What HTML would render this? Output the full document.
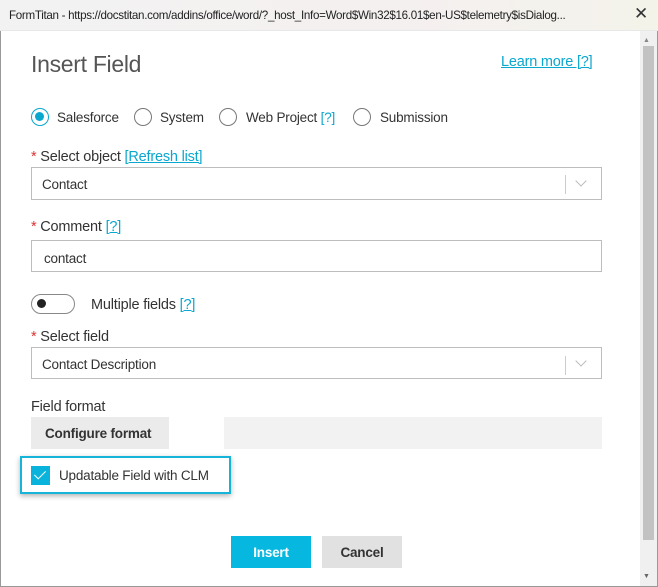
<!DOCTYPE html>
<html><head><style>
*{margin:0;padding:0;box-sizing:border-box}
body{width:658px;height:587px;background:#fff;font-family:"Segoe UI","Liberation Sans",sans-serif;color:#333;position:relative;overflow:hidden;font-size:13.5px;letter-spacing:-0.2px}
.a{position:absolute;white-space:nowrap}
.tb{left:0;top:0;width:658px;height:31px;background:linear-gradient(90deg,#f2f2f2,#f5f0f0 60%,#f3f3ea);border-bottom:1px solid #e8e8e8}
.lnk{color:#0aa7cf;text-decoration:underline}
.q{color:#0aa7cf}
.radio{width:18px;height:18px;border:1.5px solid #777;border-radius:50%;background:#fff}
.box{border:1px solid #bdbdbd;background:#fff}
.req{color:#d33}
.l{font-size:14.5px}
</style></head><body>
<div class="a tb"></div>
<div class="a" style="left:9px;top:9px;font-size:11.6px;color:#222;letter-spacing:-0.3px">FormTitan - https://docstitan.com/addins/office/word/?_host_Info=Word$Win32$16.01$en-US$telemetry$isDialog...</div>
<div class="a" style="left:634px;top:4px;font-size:17px;color:#333">✕</div>
<div class="a" style="left:0;top:31px;width:1px;height:556px;background:#999"></div>
<div class="a" style="left:0;top:586px;width:658px;height:1px;background:#999"></div>
<div class="a" style="left:657px;top:31px;width:1px;height:556px;background:#999"></div>
<div class="a" style="left:640px;top:31px;width:17px;height:555px;background:#f0f0f0"></div>
<div class="a" style="left:643px;top:46px;width:11px;height:494px;background:#c2c2c2"></div>
<div class="a" style="left:643px;top:37px;font-size:7px;color:#888">▲</div>
<div class="a" style="left:643px;top:573px;font-size:7px;color:#666">▼</div>

<div class="a" style="left:31px;top:51px;font-size:23px;color:#555;letter-spacing:-0.3px">Insert Field</div>
<div class="a lnk" style="left:501px;top:54px;font-size:14.5px">Learn more [?]</div>

<div class="a radio" style="left:31px;top:108px;border-color:#0aa7cf"><div style="position:absolute;left:3px;top:3px;width:9px;height:9px;border-radius:50%;background:#0aa7cf"></div></div>
<div class="a" style="left:57px;top:110px">Salesforce</div>
<div class="a radio" style="left:134px;top:108px"></div>
<div class="a" style="left:160px;top:110px">System</div>
<div class="a radio" style="left:219px;top:108px"></div>
<div class="a" style="left:246px;top:110px">Web Project <span class="q">[?]</span></div>
<div class="a radio" style="left:353px;top:108px"></div>
<div class="a" style="left:380px;top:110px">Submission</div>

<div class="a l" style="left:31px;top:149px"><span class="req">*</span> Select object <span class="lnk">[Refresh list]</span></div>
<div class="a box" style="left:31px;top:167px;width:571px;height:33px"></div>
<div class="a" style="left:42px;top:177px">Contact</div>
<div class="a" style="left:565px;top:175px;width:1px;height:19px;background:#ccc"></div>
<div class="a" style="left:577px;top:177px;width:8px;height:8px;border-right:1.5px solid #bbb;border-bottom:1.5px solid #bbb;transform:rotate(45deg)"></div>

<div class="a l" style="left:31px;top:219px"><span class="req">*</span> Comment <span class="lnk">[?]</span></div>
<div class="a box" style="left:31px;top:240px;width:571px;height:32px"></div>
<div class="a" style="left:44px;top:251px">contact</div>

<div class="a" style="left:31px;top:294px;width:44px;height:20px;border:1.5px solid #888;border-radius:10px"><div style="position:absolute;left:5px;top:4px;width:9px;height:9px;border-radius:50%;background:#222"></div></div>
<div class="a l" style="left:91px;top:297px">Multiple fields <span class="lnk">[?]</span></div>

<div class="a l" style="left:31px;top:329px"><span class="req">*</span> Select field</div>
<div class="a box" style="left:31px;top:347px;width:571px;height:32px"></div>
<div class="a" style="left:42px;top:357px">Contact Description</div>
<div class="a" style="left:565px;top:356px;width:1px;height:19px;background:#ccc"></div>
<div class="a" style="left:577px;top:357px;width:8px;height:8px;border-right:1.5px solid #bbb;border-bottom:1.5px solid #bbb;transform:rotate(45deg)"></div>

<div class="a l" style="left:31px;top:399px">Field format</div>
<div class="a" style="left:31px;top:417px;width:138px;height:32px;background:#ebebeb"></div>
<div class="a" style="left:45px;top:426px;font-weight:bold;color:#333">Configure format</div>
<div class="a" style="left:224px;top:417px;width:378px;height:32px;background:#f2f2f2"></div>

<div class="a" style="left:20px;top:456px;width:211px;height:38px;border:2.5px solid #16b4d8;box-shadow:0 2px 5px rgba(0,0,0,.3)"></div>
<div class="a" style="left:31px;top:466px;width:19px;height:19px;background:#0ab3dc"><div style="position:absolute;left:6px;top:2px;width:6px;height:11px;border-right:1.5px solid #fff;border-bottom:1.5px solid #fff;transform:rotate(45deg)"></div></div>
<div class="a" style="left:59px;top:468px">Updatable Field with CLM</div>

<div class="a" style="left:231px;top:536px;width:80px;height:32px;background:#06b8e0;color:#fff;font-weight:bold;text-align:center;line-height:33px">Insert</div>
<div class="a" style="left:322px;top:536px;width:80px;height:32px;background:#e1e1e1;color:#333;font-weight:bold;text-align:center;line-height:33px">Cancel</div>
</body></html>
